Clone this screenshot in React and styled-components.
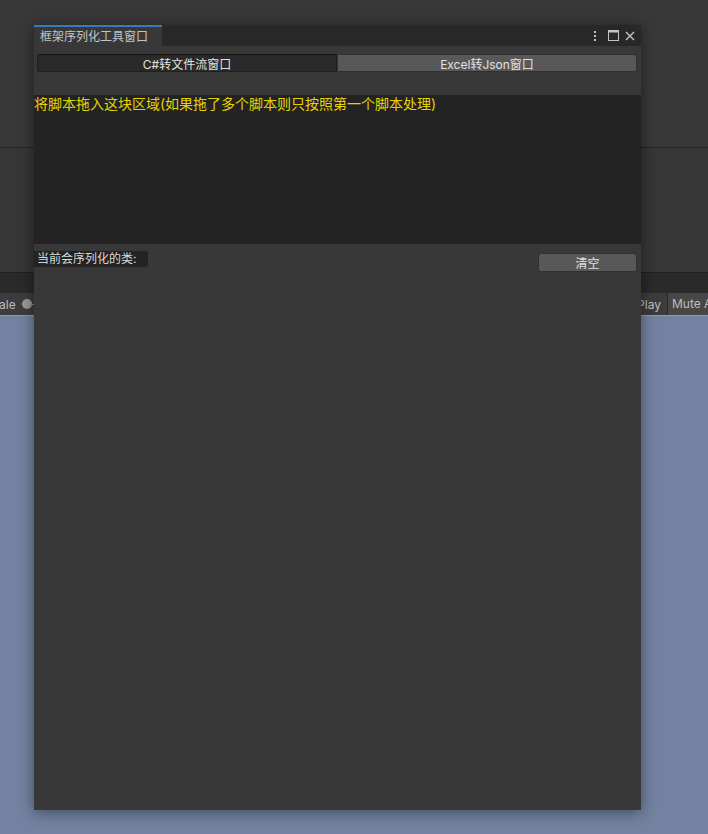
import React from 'react';
import styled, { createGlobalStyle } from 'styled-components';

const GlobalStyle = createGlobalStyle`
  html, body {
    margin: 0;
    padding: 0;
    background: #383838;
  }
  body {
    font-family: 'Inter', 'Noto Sans CJK SC', sans-serif;
  }
`;

function App() {
  return (
    <Editor>
      <GlobalStyle />
      <TopPanel />
      <MidPanel />
      <DarkStrip />
      <SceneToolbar>
        <ToolText>ale</ToolText>
        <SliderKnob />
        <SliderLine />
        <Spacer />
        <ToolText>Play</ToolText>
        <ToolButton>Mute Audio</ToolButton>
      </SceneToolbar>
      <SceneView />

      <Window>
        <TabBar>
          <Tab>框架序列化工具窗口</Tab>
          <TabIcons>
            <svg width="4" height="12" viewBox="0 0 4 12">
              <rect x="1" y="1" width="2" height="2" fill="#c4c4c4" />
              <rect x="1" y="5" width="2" height="2" fill="#c4c4c4" />
              <rect x="1" y="9" width="2" height="2" fill="#c4c4c4" />
            </svg>
            <MaxIcon width="11" height="11" viewBox="0 0 11 11">
              <rect x="0.5" y="0.5" width="10" height="10" fill="none" stroke="#c4c4c4" />
              <rect x="0.5" y="0.5" width="10" height="2" fill="#c4c4c4" />
            </MaxIcon>
            <svg width="10" height="10" viewBox="0 0 10 10">
              <path d="M1 1 L9 9 M9 1 L1 9" stroke="#c4c4c4" strokeWidth="1.4" />
            </svg>
          </TabIcons>
        </TabBar>
        <ModeBar>
          <ModeButton active>C#转文件流窗口</ModeButton>
          <ModeButton>Excel转Json窗口</ModeButton>
        </ModeBar>
        <DropArea>将脚本拖入这块区域(如果拖了多个脚本则只按照第一个脚本处理)</DropArea>
        <ListArea>
          <ListHeader>
            <ClassLabel>当前会序列化的类:</ClassLabel>
            <ClearButton>清空</ClearButton>
          </ListHeader>
        </ListArea>
      </Window>
    </Editor>
  );
}

export default App;

const Editor = styled.div`
  position: relative;
  width: 708px;
  height: 834px;
  display: flex;
  flex-direction: column;
  overflow: hidden;
`;

const TopPanel = styled.div`
  height: 147px;
  background: #383838;
  border-bottom: 1px solid #232323;
`;

const MidPanel = styled.div`
  height: 124px;
  background: #363636;
  border-bottom: 1px solid #1f1f1f;
`;

const DarkStrip = styled.div`
  height: 20px;
  background: #2a2a2a;
`;

const SceneToolbar = styled.div`
  height: 22px;
  background: #3c3c3c;
  display: flex;
  align-items: center;
  font-size: 12px;
  color: #bdbdbd;
`;

const ToolText = styled.span`
  margin-right: 6px;
  margin-left: -1px;
`;

const SliderKnob = styled.span`
  width: 10px;
  height: 10px;
  border-radius: 50%;
  background: #999;
`;

const SliderLine = styled.span`
  width: 8px;
  height: 1px;
  background: #888;
`;

const Spacer = styled.div`
  flex: 1;
`;

const ToolButton = styled.div`
  height: 22px;
  line-height: 22px;
  padding-left: 4px;
  background: #474747;
  border-left: 1px solid #2a2a2a;
  white-space: nowrap;
  width: 36px;
  overflow: hidden;
`;

const SceneView = styled.div`
  flex: 1;
  background: #7382a0;
  border-top: 1px solid #8c9ab6;
`;

const Window = styled.div`
  position: absolute;
  left: 34px;
  top: 25px;
  width: 607px;
  height: 785px;
  background: #383838;
  display: flex;
  flex-direction: column;
  box-shadow: 0 2px 14px rgba(0, 0, 0, 0.45);
`;

const TabBar = styled.div`
  height: 21px;
  background: #282828;
  display: flex;
  align-items: stretch;
  justify-content: space-between;
`;

const Tab = styled.div`
  width: 122px;
  padding-left: 6px;
  background: #383838;
  border-top: 2px solid #3a79bb;
  color: #c4c4c4;
  font-size: 12px;
  line-height: 19px;
  white-space: nowrap;
`;

const TabIcons = styled.div`
  display: flex;
  align-items: center;
  gap: 6px;
  padding-right: 6px;
`;

const MaxIcon = styled.svg`
  margin-left: 5px;
`;

const ModeBar = styled.div`
  height: 49px;
  box-sizing: border-box;
  padding: 8px 4px 0 3px;
  display: flex;
  align-items: flex-start;
`;

const ModeButton = styled.div`
  flex: 1;
  height: 18px;
  box-sizing: border-box;
  display: flex;
  align-items: center;
  justify-content: center;
  font-size: 12px;
  color: #e2e2e2;
  background: ${p => (p.active ? '#2a2a2a' : '#585858')};
  border: 1px solid ${p => (p.active ? '#202020' : '#303030')};
  border-top-color: ${p => (p.active ? '#151515' : '#303030')};
  border-radius: ${p => (p.active ? '3px 0 0 3px' : '0 3px 3px 0')};
`;

const DropArea = styled.div`
  height: 149px;
  background: #232323;
  color: #e6d400;
  font-size: 14px;
  line-height: 18px;
  white-space: nowrap;
`;

const ListArea = styled.div`
  flex: 1;
  background: #383838;
`;

const ListHeader = styled.div`
  display: flex;
  justify-content: space-between;
  align-items: flex-start;
  padding: 7px 4px 0 0;
`;

const ClassLabel = styled.div`
  background: #232323;
  border-radius: 0 3px 3px 0;
  color: #d8d8d8;
  font-size: 12px;
  line-height: 16px;
  padding: 0 12px 0 3px;
`;

const ClearButton = styled.div`
  margin-top: 2px;
  width: 99px;
  height: 19px;
  box-sizing: border-box;
  background: #585858;
  border: 1px solid #303030;
  border-radius: 3px;
  color: #e2e2e2;
  font-size: 12px;
  display: flex;
  align-items: center;
  justify-content: center;
`;
